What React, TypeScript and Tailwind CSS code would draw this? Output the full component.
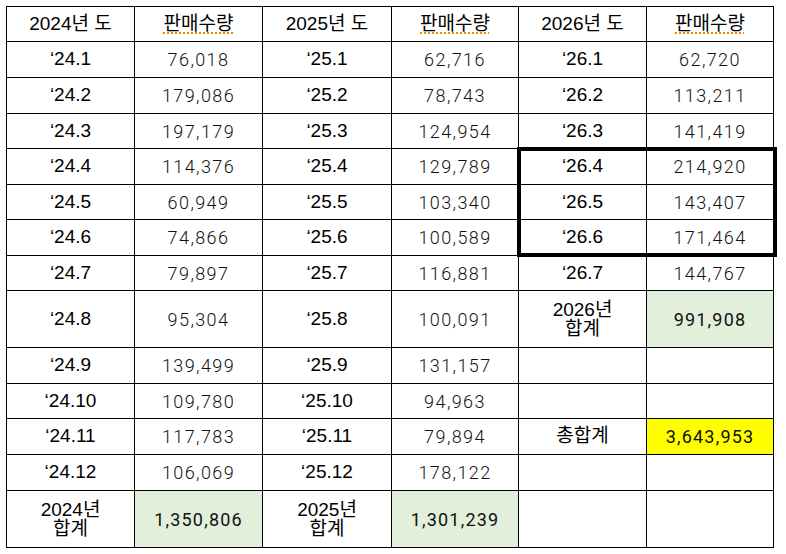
type Cell = { t: string; kind?: 'date' | 'num' | 'head' | 'sum' | 'label' | 'total'; bg?: string };

const COL = 'grid-cols-[128px_128px_129px_127px_128px_127px]';
const ROWS = 'grid-rows-[35px_36px_36px_35px_36px_35px_36px_35px_57px_36px_35px_36px_36px_57px]';

const d = (t: string): Cell => ({ t, kind: 'date' });
const n = (t: string): Cell => ({ t, kind: 'num' });
const e: Cell = { t: '' };

const ROWS_DATA: Cell[][] = [
  [{ t: '2024년 도', kind: 'head' }, { t: '판매수량', kind: 'head' }, { t: '2025년 도', kind: 'head' }, { t: '판매수량', kind: 'head' }, { t: '2026년 도', kind: 'head' }, { t: '판매수량', kind: 'head' }],
  [d('‘24.1'), n('76,018'), d('‘25.1'), n('62,716'), d('‘26.1'), n('62,720')],
  [d('‘24.2'), n('179,086'), d('‘25.2'), n('78,743'), d('‘26.2'), n('113,211')],
  [d('‘24.3'), n('197,179'), d('‘25.3'), n('124,954'), d('‘26.3'), n('141,419')],
  [d('‘24.4'), n('114,376'), d('‘25.4'), n('129,789'), d('‘26.4'), n('214,920')],
  [d('‘24.5'), n('60,949'), d('‘25.5'), n('103,340'), d('‘26.5'), n('143,407')],
  [d('‘24.6'), n('74,866'), d('‘25.6'), n('100,589'), d('‘26.6'), n('171,464')],
  [d('‘24.7'), n('79,897'), d('‘25.7'), n('116,881'), d('‘26.7'), n('144,767')],
  [d('‘24.8'), n('95,304'), d('‘25.8'), n('100,091'), { t: '2026년\n합계', kind: 'sum' }, { t: '991,908', kind: 'total', bg: 'bg-[#e2efda]' }],
  [d('‘24.9'), n('139,499'), d('‘25.9'), n('131,157'), e, e],
  [d('‘24.10'), n('109,780'), d('‘25.10'), n('94,963'), e, e],
  [d('‘24.11'), n('117,783'), d('‘25.11'), n('79,894'), { t: '총합계', kind: 'label' }, { t: '3,643,953', kind: 'total', bg: 'bg-[#ffff00]' }],
  [d('‘24.12'), n('106,069'), d('‘25.12'), n('178,122'), e, e],
  [{ t: '2024년\n합계', kind: 'sum' }, { t: '1,350,806', kind: 'total', bg: 'bg-[#e2efda]' }, { t: '2025년\n합계', kind: 'sum' }, { t: '1,301,239', kind: 'total', bg: 'bg-[#e2efda]' }, e, e],
];

function CellView({ c }: { c: Cell }) {
  const base = `flex items-center justify-center border-r border-b border-black text-center ${c.bg ?? 'bg-white'}`;
  if (c.kind === 'head') {
    const squiggle = c.t === '판매수량';
    return (
      <div className={`${base} font-['Liberation_Sans','Noto_Sans_CJK_KR',sans-serif] text-[19px] text-black`}>
        <span className={squiggle ? 'underline decoration-dotted decoration-[#f08a00] decoration-2 underline-offset-[3px]' : ''}>
          {c.t}
        </span>
      </div>
    );
  }
  if (c.kind === 'date' || c.kind === 'label') {
    return <div className={`${base} font-['Liberation_Sans','Noto_Sans_CJK_KR',sans-serif] text-[19px] text-black`}>{c.t}</div>;
  }
  if (c.kind === 'sum') {
    return (
      <div className={`${base} whitespace-pre-line font-['Liberation_Sans','Noto_Sans_CJK_KR',sans-serif] text-[19px] leading-[19px] text-black`}>
        {c.t}
      </div>
    );
  }
  if (c.kind === 'num') {
    return <div className={`${base} font-['Roboto',sans-serif] font-light text-[18px] tracking-[1.4px] text-[#111]`}>{c.t}</div>;
  }
  if (c.kind === 'total') {
    return <div className={`${base} font-['Roboto',sans-serif] font-normal text-[18px] tracking-[1.2px] text-[#111]`}>{c.t}</div>;
  }
  return <div className={base} />;
}

export default function App() {
  return (
    <div className="min-h-screen w-full bg-white pl-[6px] pt-[6px]">
      <div className={`relative inline-grid ${COL} ${ROWS} border-l border-t border-black`}>
        {ROWS_DATA.flatMap((row, ri) => row.map((c, ci) => <CellView key={`${ri}-${ci}`} c={c} />))}
        {/* thick highlight box around '26.4 – '26.6 */}
        <div className="pointer-events-none absolute left-[510px] top-[140px] h-[110px] w-[260px] border-4 border-black" />
      </div>
    </div>
  );
}
